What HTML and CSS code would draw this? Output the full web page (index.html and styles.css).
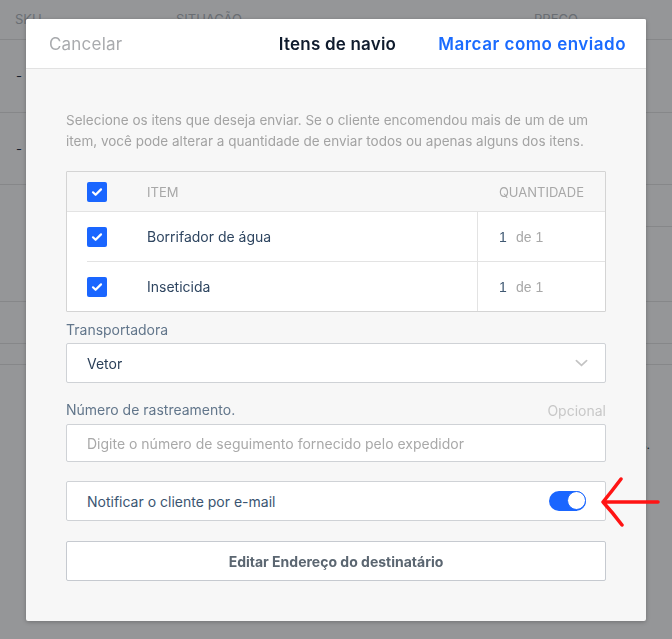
FILE: index.html
```html
<!DOCTYPE html>
<html lang="pt">
<head>
  <meta charset="utf-8">
  <title>Itens de navio</title>
  <link rel="stylesheet" href="styles.css">
</head>
<body>

<div class="page">
  <div class="page-head">
    <span class="col-sku">SKU</span>
    <span class="col-status">SITUAÇÃO</span>
    <span class="col-price">PREÇO</span>
  </div>
  <div class="page-row r1"><span class="dash">-</span></div>
  <div class="page-row r2"><span class="dash">-</span></div>
  <div class="page-row r3"><div class="r3-side"></div></div>
  <div class="page-row r4"></div>
  <div class="page-row r5"></div>
  <div class="page-foot">
    <p class="foot-note">Todos os itens enviados.</p>
    <div class="foot-cols">
      <div class="foot-col a"></div>
      <div class="foot-col b"></div>
      <div class="foot-col c"></div>
    </div>
  </div>
</div>

<div class="overlay"></div>

<div class="modal">
  <div class="modal-head">
    <a class="cancel">Cancelar</a>
    <span class="modal-title">Itens de navio</span>
    <a class="confirm">Marcar como enviado</a>
  </div>

  <div class="modal-body">
    <p class="intro">Selecione os itens que deseja enviar. Se o cliente encomendou mais de um de um item, você pode alterar a quantidade de enviar todos ou apenas alguns dos itens.</p>

    <div class="items">
      <div class="items-head">
        <span class="check"><svg viewBox="0 0 20 20"><path d="M6 10.3l2.6 2.5L14 7.4"/></svg></span>
        <span class="items-label">Item</span>
        <span class="qty-label">Quantidade</span>
      </div>
      <div class="item-row">
        <div class="item-cell">
          <span class="check"><svg viewBox="0 0 20 20"><path d="M6 10.3l2.6 2.5L14 7.4"/></svg></span>
          <span class="item-name">Borrifador de água</span>
        </div>
        <div class="qty-cell"><span class="qty-value">1</span><span class="qty-total">de 1</span></div>
      </div>
      <div class="item-row last">
        <div class="item-cell">
          <span class="check"><svg viewBox="0 0 20 20"><path d="M6 10.3l2.6 2.5L14 7.4"/></svg></span>
          <span class="item-name">Inseticida</span>
        </div>
        <div class="qty-cell"><span class="qty-value">1</span><span class="qty-total">de 1</span></div>
      </div>
    </div>

    <div class="field carrier">
      <label class="field-label">Transportadora</label>
      <div class="select">
        <span>Vetor</span>
        <svg class="chevron" viewBox="0 0 14 8"><path d="M1.5 1.5L7 6.5l5.5-5"/></svg>
      </div>
    </div>

    <div class="field tracking">
      <div class="field-label-row">
        <label class="field-label">Número de rastreamento.</label>
        <span class="optional">Opcional</span>
      </div>
      <div class="input">Digite o número de seguimento fornecido pelo expedidor</div>
    </div>

    <div class="notify">
      <span>Notificar o cliente por e-mail</span>
      <span class="toggle"><span class="knob"></span></span>
      <svg class="arrow" viewBox="0 0 60 52"><path d="M20 3Q11 15 2 26Q12 37 21 49M2 26h55"/></svg>
    </div>

    <button class="address-btn">Editar Endereço do destinatário</button>
  </div>
</div>

</body>
</html>
```

FILE: styles.css
```css
html, body {height: 100%;}

body {
margin: 0;
background: #fff;
font-family: Inter, "Noto Sans", sans-serif;
overflow: hidden;
}

/* page behind the dialog */

.page {
color: #1f2f44;
font-size: 13px;
}

.page-head {
height: 39px;
border-bottom: 1px solid #e4e4e4;
position: relative;
color: #b4b9bf;
font-size: 13px;
}
.page-head span {
position: absolute;
top: 11px;
}
.col-sku {left: 15px;}
.col-status {left: 176px;}
.col-price {left: 534px;}

.page-row {
border-bottom: 1px solid #e4e4e4;
display: flex;
align-items: center;
}
.dash {padding-left: 16px;}
.r1 {height: 72px;}
.r2 {height: 71px;}
.r3 {height: 116px; align-items: flex-start; justify-content: flex-end;}
.r3-side {width: 150px; height: 41px; border-bottom: 1px solid #e4e4e4;}
.r4 {height: 41px;}
.r5 {height: 20px;}

.foot-note {
margin: 0;
padding: 72px 22px 0 0;
text-align: right;
font-size: 12px;
}
.foot-cols {
display: flex;
height: 160px;
}
.foot-col.a {width: 307px;}
.foot-col.b {width: 40px; border-left: 1px solid #e4e4e4;}
.foot-col.c {flex: 1; border-left: 1px solid #e4e4e4;}

.overlay {
position: fixed;
inset: 0;
background: rgba(10, 12, 16, 0.43);
}

/* dialog */

.modal {
position: absolute;
left: 26px;
top: 19px;
width: 620px;
background: #f7f7f7;
border-radius: 2px;
box-shadow: 0 1px 4px rgba(0,0,0,0.25);
}

.modal-head {
height: 49px;
background: #fff;
border-bottom: 1px solid #e2e2e2;
border-radius: 2px 2px 0 0;
display: grid;
grid-template-columns: 1fr auto 1fr;
align-items: center;
padding: 0 20px 0 23px;
}
.cancel {
color: #a9abae;
font-size: 17px;
letter-spacing: 0.2px;
}
.modal-title {
color: #0f1b2d;
font-size: 17px;
font-weight: 600;
letter-spacing: 0.2px;
}
.confirm {
justify-self: end;
color: #1a6bff;
font-size: 17px;
font-weight: 600;
letter-spacing: 0.5px;
}

.modal-body {
padding: 41px 40px 40px;
}

.intro {
margin: 0 0 19px;
color: #a3a3a3;
font-size: 13.5px;
line-height: 21px;
}

.check {
width: 20px;
height: 20px;
border-radius: 2px;
background: #1a66ff;
display: flex;
flex: none;
}
.check svg {
width: 20px;
height: 20px;
fill: none;
stroke: #fff;
stroke-width: 2.2;
stroke-linecap: round;
stroke-linejoin: round;
}

.items {
background: #fff;
border: 1px solid #d4d4d4;
border-radius: 1px;
}
.items-head {
height: 39px;
background: #f7f7f7;
border-bottom: 1px solid #e3e3e3;
display: flex;
align-items: center;
padding: 0 21px 0 20px;
color: #a8a8a8;
font-size: 13px;
text-transform: uppercase;
}
.items-label {margin-left: 40px; flex: 1;}

.item-row {
display: flex;
height: 50px;
}
.item-cell {
flex: 1;
margin-left: 20px;
display: flex;
align-items: center;
border-bottom: 1px solid #e3e3e3;
}
.item-name {
margin-left: 40px;
color: #2e4560;
font-size: 14px;
}
.qty-cell {
width: 128px;
border-left: 1px solid #e3e3e3;
border-bottom: 1px solid #e3e3e3;
display: flex;
align-items: center;
padding-left: 21px;
box-sizing: border-box;
font-family: "Liberation Sans", Arial, sans-serif;
font-size: 14px;
}
.item-row.last .item-cell,
.item-row.last .qty-cell {border-bottom: 0;}
.item-row.last {height: 49px;}
.qty-value {color: #3f5872; width: 17px;}
.qty-total {color: #a8a8a8;}

.field-label {
display: block;
color: #62768b;
font-size: 14px;
line-height: 20px;
}
.carrier {margin-top: 8px;}
.carrier .field-label {margin-bottom: 3px;}
.select {
height: 38px;
background: #fff;
border: 1px solid #cfd2d6;
border-radius: 2px;
display: flex;
align-items: center;
justify-content: space-between;
padding: 0 17px 0 20px;
color: #2a3f58;
font-size: 14px;
}
.chevron {
width: 13px;
height: 8px;
fill: none;
stroke: #c3c3c3;
stroke-width: 1.8;
stroke-linecap: round;
}

.tracking {margin-top: 17px;}
.field-label-row {
display: flex;
justify-content: space-between;
align-items: center;
margin-bottom: 4px;
}
.optional {
color: #c8c8c8;
font-size: 14px;
}
.input {
height: 36px;
background: #fff;
border: 1px solid #cfd2d6;
border-radius: 2px;
display: flex;
align-items: center;
padding: 0 20px;
color: #a9a9a9;
font-size: 14px;
}

.notify {
position: relative;
margin-top: 19px;
height: 38px;
background: #fff;
border: 1px solid #cfd2d6;
border-radius: 2px;
display: flex;
align-items: center;
justify-content: space-between;
padding: 0 19px 0 20px;
color: #3a5571;
font-size: 14px;
}
.toggle {
width: 37px;
height: 20px;
border-radius: 10px;
background: #1a66ff;
display: flex;
justify-content: flex-end;
}
.knob {
width: 17px;
height: 17px;
border-radius: 50%;
background: #fff;
border: 1.5px solid #1a66ff;
}
.arrow {
position: absolute;
left: 534px;
top: -6px;
width: 60px;
height: 52px;
fill: none;
stroke: #ff1414;
stroke-width: 3.5;
stroke-linecap: round;
stroke-linejoin: round;
}

.address-btn {
display: block;
width: 100%;
margin-top: 20px;
height: 40px;
background: #fff;
border: 1px solid #c6cad0;
border-radius: 2px;
color: #5b6671;
font-family: inherit;
font-size: 14px;
font-weight: 700;
}
```
